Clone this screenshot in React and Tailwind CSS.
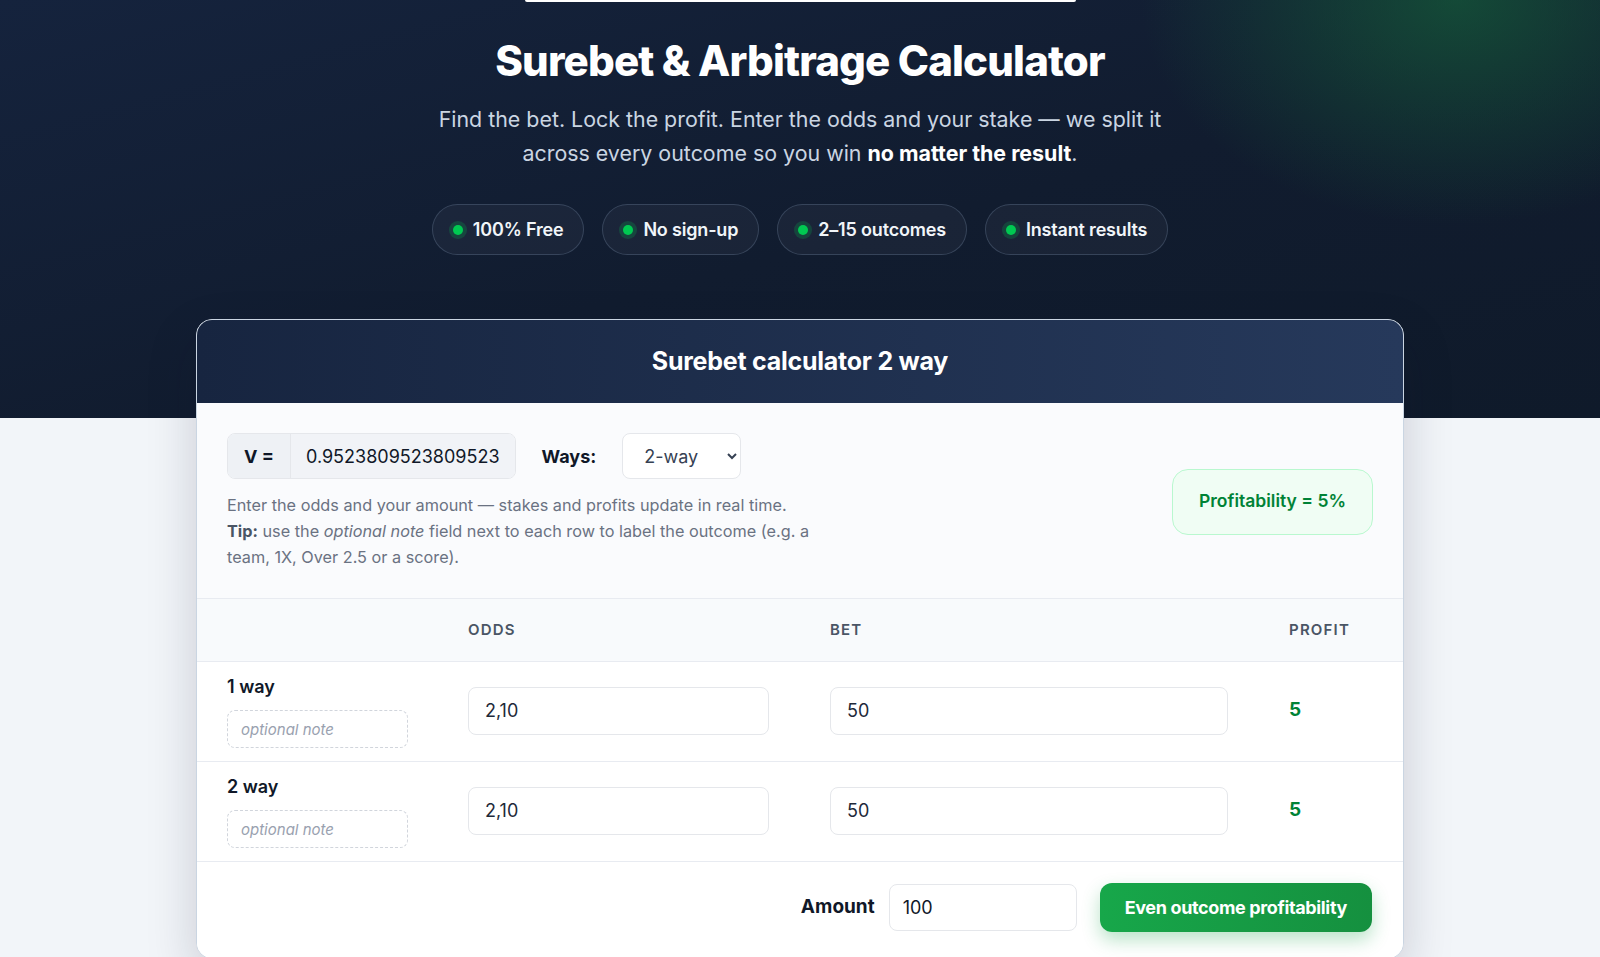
import { useState } from 'react';

const features = ['100% Free', 'No sign-up', '2–15 outcomes', 'Instant results'];

const Pill = ({ label }) => (
    <div className="flex items-center gap-2.5 h-[51px] px-5 rounded-full border border-slate-500/40 bg-white/[0.04]">
        <span className="w-2.5 h-2.5 rounded-full bg-green-500 ring-4 ring-green-500/20" />
        <span className="text-[18px] font-semibold text-slate-100 tracking-[-0.01em]">{label}</span>
    </div>
);

const OutcomeRow = ({ label, odds, bet, profit }) => (
    <div className="grid grid-cols-[241px_362px_459px_1fr] items-center pl-[30px] pr-[30px] pt-[11px] pb-[13px] border-b border-[#e8ebf1] bg-white">
        <div className="flex flex-col gap-2.5">
            <span className="text-[18px] font-semibold text-gray-900 leading-[27px]">{label}</span>
            <input
                placeholder="optional note"
                className="w-[181px] h-[38px] px-[13px] rounded-lg border border-dashed border-gray-300 text-[15px] italic placeholder:text-gray-400 outline-none"
            />
        </div>
        <input
            defaultValue={odds}
            className="w-[301px] h-12 px-4 rounded-lg border border-gray-200 text-[18px] text-gray-800 outline-none bg-white"
        />
        <input
            defaultValue={bet}
            className="w-[398px] h-12 px-4 rounded-lg border border-gray-200 text-[18px] text-gray-800 outline-none bg-white"
        />
        <span className="text-[19px] font-bold text-green-700">{profit}</span>
    </div>
);

export default function App() {
    const [ways, setWays] = useState('2');

    return (
        <div className="min-h-screen bg-[#f2f5f9] font-['Inter','Liberation_Sans',sans-serif] overflow-hidden">
            {/* Hero */}
            <section className="h-[418px] bg-[radial-gradient(ellipse_420px_300px_at_91%_0%,rgba(22,110,60,0.55),transparent_75%),linear-gradient(165deg,#15233d_0%,#111c2f_55%,#0f1a2a_100%)]">
                <div className="mx-auto w-[551px] h-[2px] bg-white rounded-b" />
                <h1 className="mt-[35px] text-center text-[42px] leading-[48px] font-extrabold text-white tracking-[-0.02em]">
                    Surebet &amp; Arbitrage Calculator
                </h1>
                <p className="mt-[17px] mx-auto max-w-[780px] text-center text-[21.4px] leading-[34px] text-slate-300">
                    Find the bet. Lock the profit. Enter the odds and your stake — we split it across every outcome so you win{' '}
                    <strong className="font-bold text-white">no matter the result</strong>.
                </p>
                <div className="mt-[34px] flex justify-center gap-[18px]">
                    {features.map((f) => (
                        <Pill key={f} label={f} />
                    ))}
                </div>
            </section>

            {/* Calculator card */}
            <div className="relative -mt-[99px] mx-auto w-[1208px] rounded-2xl border border-slate-300 bg-white shadow-[0_20px_50px_rgba(15,23,42,0.18)] overflow-hidden">
                <div className="h-[83px] flex items-center justify-center bg-gradient-to-r from-[#172540] to-[#26395b]">
                    <h2 className="text-[25px] font-bold text-white tracking-[-0.01em]">Surebet calculator 2 way</h2>
                </div>

                {/* Top controls */}
                <div className="flex items-center justify-between pl-[30px] pr-[30px] pt-[30px] pb-[28px] bg-[#fafbfd] border-b border-[#e8ebf1]">
                    <div>
                        <div className="flex items-center gap-[26px]">
                            <div className="flex h-[46px] rounded-lg border border-gray-200 overflow-hidden">
                                <span className="w-[63px] flex items-center justify-center bg-[#eef1f5] border-r border-gray-200 text-[18px] font-bold text-gray-900">
                                    V =
                                </span>
                                <span className="flex items-center px-[15px] bg-[#f1f3f7] text-[18px] text-gray-900">
                                    0.9523809523809523
                                </span>
                            </div>
                            <span className="text-[18px] font-bold text-gray-900">Ways:</span>
                            <select
                                value={ways}
                                onChange={(e) => setWays(e.target.value)}
                                className="w-[119px] h-[46px] pl-[17px] pr-1 rounded-lg border border-gray-200 bg-white text-[18px] text-gray-700 outline-none"
                            >
                                <option value="2">2-way</option>
                                <option value="3">3-way</option>
                                <option value="4">4-way</option>
                            </select>
                        </div>
                        <p className="mt-[13px] max-w-[600px] text-[16.25px] leading-[26px] text-gray-500">
                            Enter the odds and your amount — stakes and profits update in real time.
                            <br />
                            <strong className="font-bold text-gray-600">Tip:</strong> use the <em>optional note</em> field next to each row to label the outcome (e.g. a team, 1X, Over 2.5 or a score).
                        </p>
                    </div>
                    <div className="px-[26px] h-[66px] flex items-center rounded-2xl border border-green-200 bg-green-50 text-[17.5px] font-semibold text-green-700">
                        Profitability = 5%
                    </div>
                </div>

                {/* Table header */}
                <div className="grid grid-cols-[241px_362px_459px_1fr] items-center h-[63px] pl-[30px] pr-[30px] bg-[#f8fafc] border-b border-[#e8ebf1] text-[15px] font-semibold uppercase tracking-[0.08em] text-gray-600">
                    <span />
                    <span>Odds</span>
                    <span>Bet</span>
                    <span>Profit</span>
                </div>

                <OutcomeRow label="1 way" odds="2,10" bet="50" profit="5" />
                <OutcomeRow label="2 way" odds="2,10" bet="50" profit="5" />

                {/* Footer */}
                <div className="flex items-center justify-end gap-[14px] pr-[31px] pt-[21px] pb-[26px] bg-white">
                    <span className="text-[19px] font-bold text-gray-900">Amount</span>
                    <input
                        defaultValue="100"
                        className="w-[188px] h-[47px] px-[13px] rounded-lg border border-gray-200 text-[18px] text-gray-900 outline-none"
                    />
                    <button className="ml-[9px] h-[49px] px-[25px] rounded-xl bg-gradient-to-r from-[#17a74a] to-[#15903f] text-[18px] font-bold text-white tracking-[-0.02em] shadow-[0_8px_18px_rgba(22,163,74,0.3)]">
                        Even outcome profitability
                    </button>
                </div>
            </div>
        </div>
    );
}
